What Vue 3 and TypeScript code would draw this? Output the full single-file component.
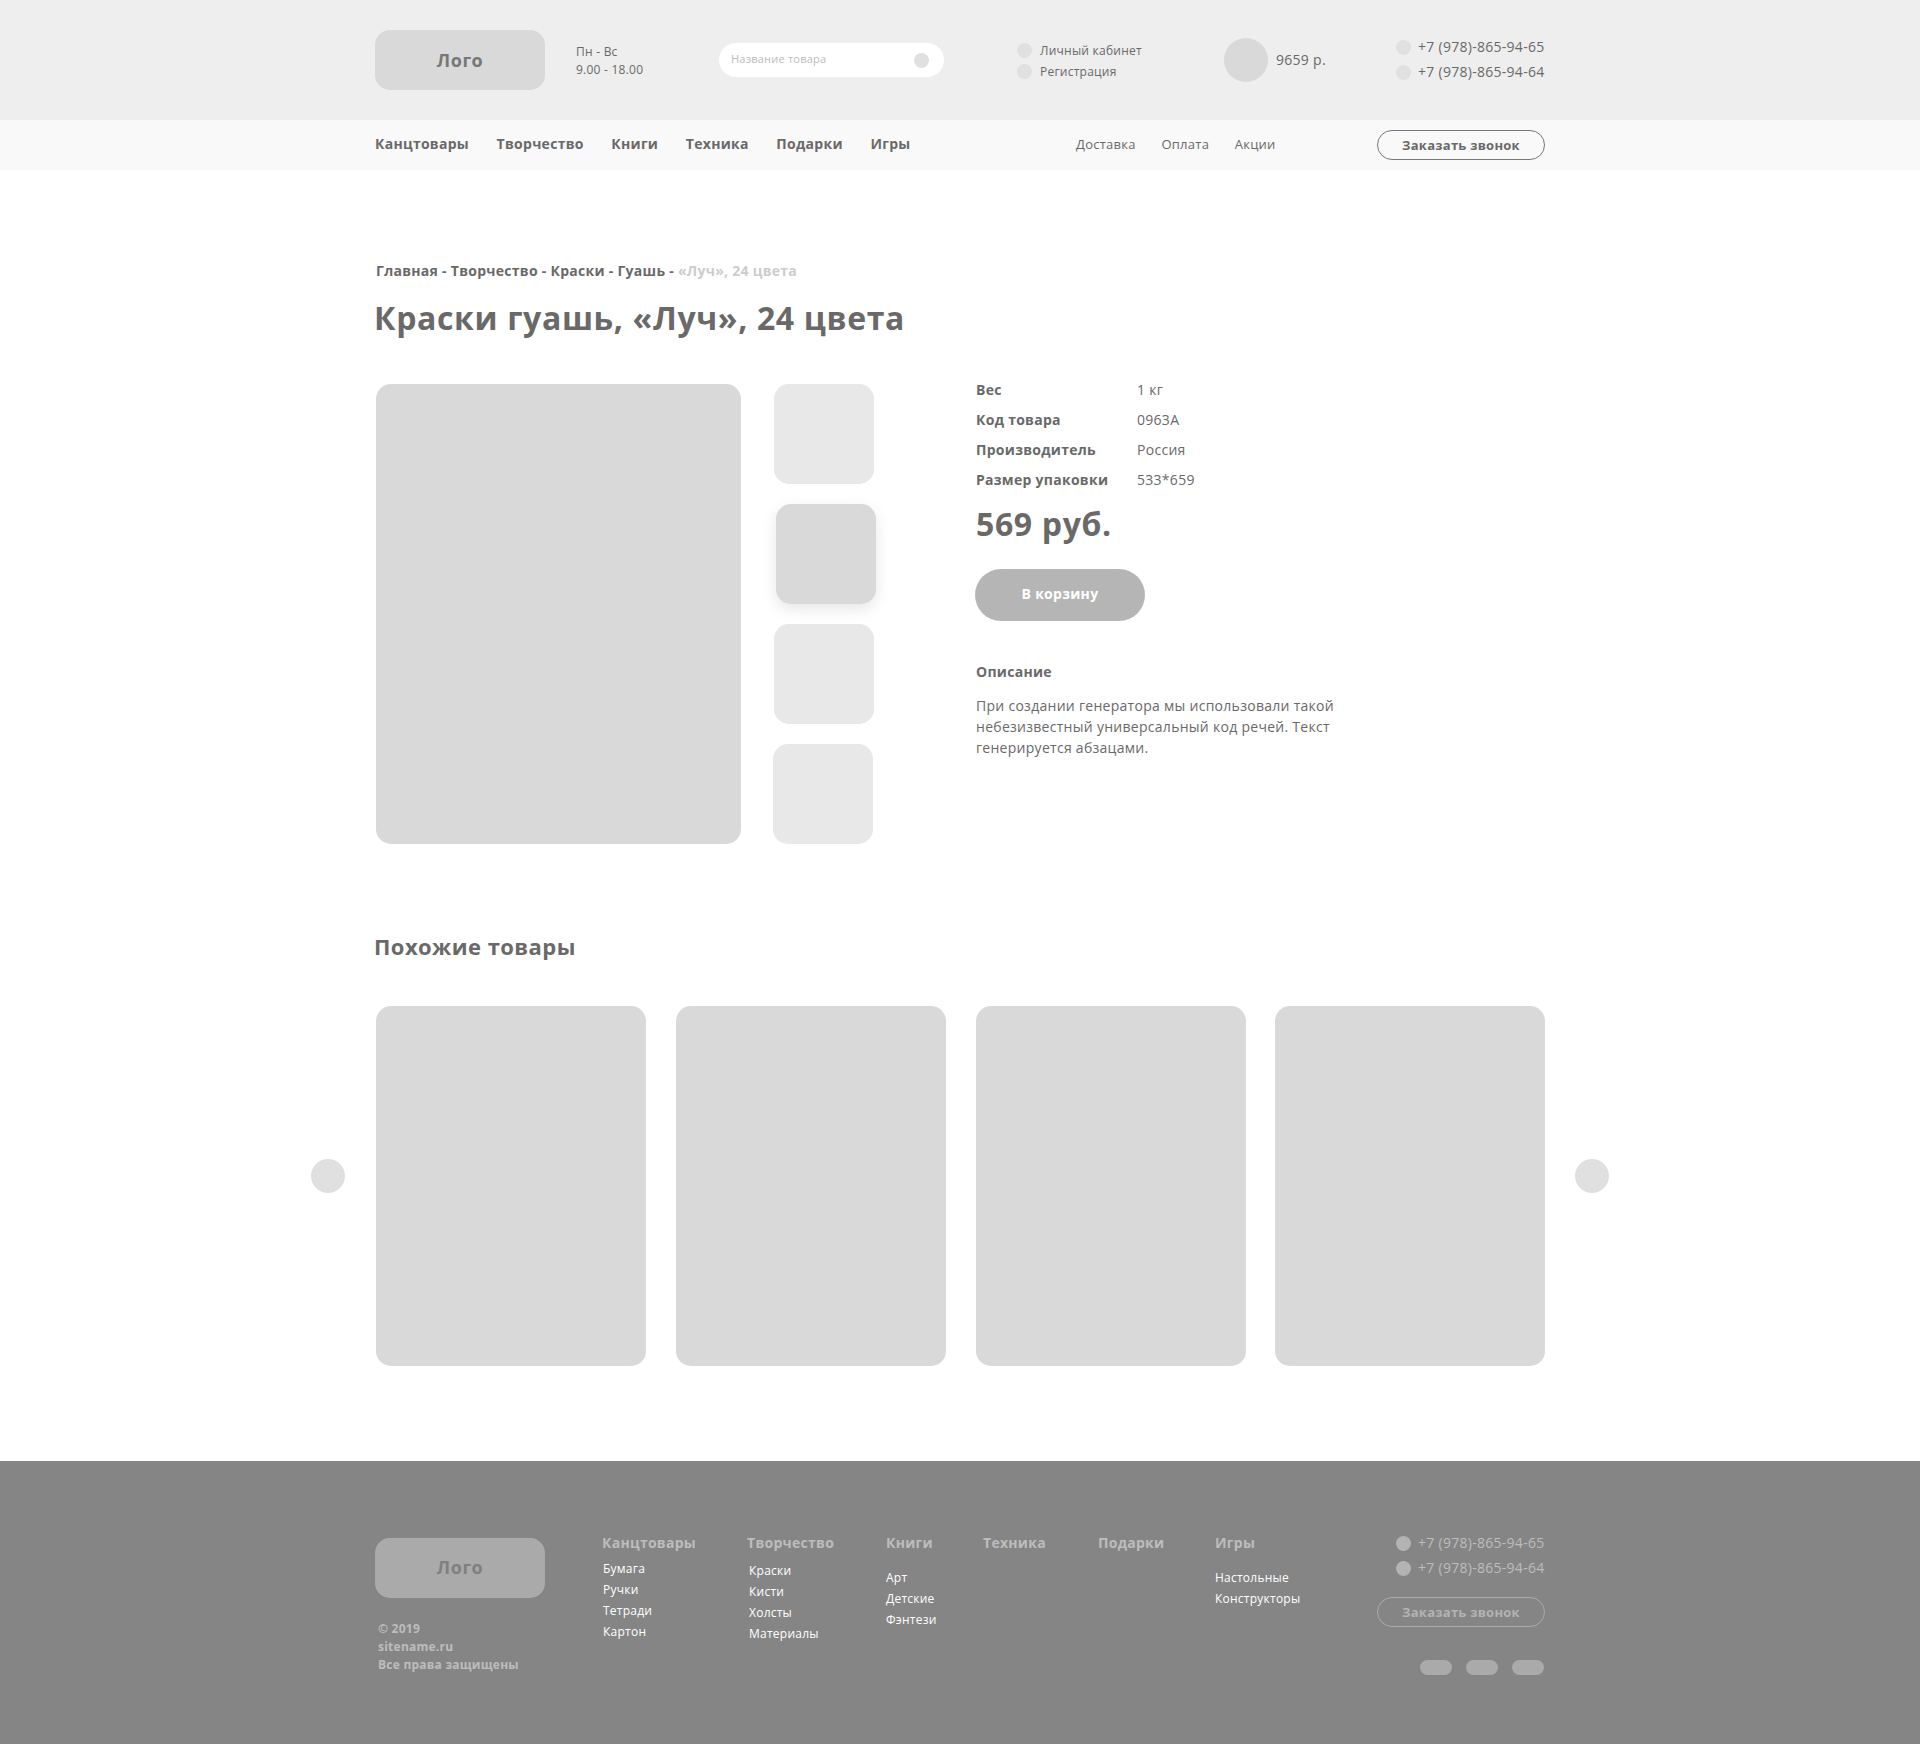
<script setup lang="ts">
interface FooterColumn {
  title: string;
  items: string[];
  variant: string;
}

const navItems = ['Канцтовары', 'Творчество', 'Книги', 'Техника', 'Подарки', 'Игры'];
const infoLinks = ['Доставка', 'Оплата', 'Акции'];
const phones = ['+7 (978)-865-94-65', '+7 (978)-865-94-64'];
const thumbs = ['first', 'active', 'third', 'last'];
const specs = [
  { label: 'Вес', value: '1 кг' },
  { label: 'Код товара', value: '0963А' },
  { label: 'Производитель', value: 'Россия' },
  { label: 'Размер упаковки', value: '533*659' },
];
const footerColumns: FooterColumn[] = [
  { title: 'Канцтовары', items: ['Бумага', 'Ручки', 'Тетради', 'Картон'], variant: 'col-stationery' },
  { title: 'Творчество', items: ['Краски', 'Кисти', 'Холсты', 'Материалы'], variant: 'col-craft' },
  { title: 'Книги', items: ['Арт', 'Детские', 'Фэнтези'], variant: 'col-books' },
  { title: 'Техника', items: [], variant: 'col-tech' },
  { title: 'Подарки', items: [], variant: 'col-gifts' },
  { title: 'Игры', items: ['Настольные', 'Конструкторы'], variant: 'col-games' },
];
</script>

<template>
  <div class="page">
    <header class="top">
      <div class="wrap top-row">
        <div class="logo">Лого</div>
        <div class="hours">
          <div>Пн - Вс</div>
          <div>9.00 - 18.00</div>
        </div>
        <div class="search">
          <span class="search-text">Название товара</span>
          <span class="search-dot"></span>
        </div>
        <div class="account">
          <div class="account-row"><span class="dot"></span>Личный кабинет</div>
          <div class="account-row"><span class="dot"></span>Регистрация</div>
        </div>
        <div class="cart">
          <span class="cart-icon"></span>
          <span class="cart-sum">9659 р.</span>
        </div>
        <div class="phones">
          <div v-for="phone in phones" :key="phone" class="phone"><span class="dot"></span><span class="phone-num">{{ phone }}</span></div>
        </div>
      </div>
    </header>

    <nav class="nav">
      <div class="wrap nav-row">
        <div class="nav-main">
          <span v-for="item in navItems" :key="item">{{ item }}</span>
        </div>
        <div class="nav-info">
          <span v-for="link in infoLinks" :key="link">{{ link }}</span>
        </div>
        <button class="call-btn">Заказать звонок</button>
      </div>
    </nav>

    <main class="wrap content">
      <div class="crumbs">Главная - Творчество - Краски - Гуашь - <span>«Луч», 24 цвета</span></div>
      <h1 class="title">Краски гуашь, «Луч», 24 цвета</h1>

      <section class="product">
        <div class="main-image"></div>
        <div class="thumbs">
          <div v-for="thumb in thumbs" :key="thumb" class="thumb" :class="thumb"></div>
        </div>
        <div class="details">
          <div v-for="spec in specs" :key="spec.label" class="spec">
            <span class="spec-label">{{ spec.label }}</span>
            <span>{{ spec.value }}</span>
          </div>
          <div class="price">569 руб.</div>
          <button class="buy-btn">В корзину</button>
          <div class="desc-title">Описание</div>
          <p class="desc">При создании генератора мы использовали такой небезизвестный универсальный код речей. Текст генерируется абзацами.</p>
        </div>
      </section>

      <h2 class="similar-title">Похожие товары</h2>
      <section class="carousel">
        <span class="arrow arrow-left"></span>
        <div class="cards">
          <div v-for="n in 4" :key="n" class="card"></div>
        </div>
        <span class="arrow arrow-right"></span>
      </section>
    </main>

    <footer class="footer">
      <div class="wrap footer-row">
        <div class="footer-brand">
          <div class="logo footer-logo">Лого</div>
          <div class="copy">
            <div>© 2019</div>
            <div>sitename.ru</div>
            <div>Все права защищены</div>
          </div>
        </div>
        <div v-for="col in footerColumns" :key="col.title" class="footer-col" :class="col.variant">
          <div class="footer-head">{{ col.title }}</div>
          <ul class="footer-list">
            <li v-for="item in col.items" :key="item">{{ item }}</li>
          </ul>
        </div>
        <div class="footer-contacts">
          <div class="phones">
            <div v-for="phone in phones" :key="phone" class="phone"><span class="dot"></span><span class="phone-num">{{ phone }}</span></div>
          </div>
          <button class="call-btn">Заказать звонок</button>
          <div class="socials">
            <span v-for="n in 3" :key="n"></span>
          </div>
        </div>
      </div>
    </footer>
  </div>
</template>

<style>
body {
  margin: 0;
  background: #fff;
}
</style>

<style scoped>
.page {
  font-family: 'Open Sans', sans-serif;
  color: #696969;
  font-size: 14px;
  height: 1744px;
  overflow: hidden;
}

.page * {
  letter-spacing: 0.02em;
}

.wrap {
  width: 1170px;
  margin: 0 auto;
}

.top {
  background: #eee;
  height: 120px;
}

.top-row {
  display: flex;
  align-items: center;
  height: 120px;
}

.logo {
  flex: none;
  width: 170px;
  height: 60px;
  border-radius: 15px;
  background: #d9d9d9;
  display: flex;
  align-items: center;
  justify-content: center;
  font-size: 18px;
  font-weight: 700;
  letter-spacing: 0.03em;
  color: #777;
}

.hours {
  flex: none;
  width: 143px;
  margin: 2px 0 0 31px;
  font-size: 12px;
  line-height: 18px;
}

.search {
  flex: none;
  box-sizing: border-box;
  width: 225px;
  height: 34px;
  border-radius: 17px;
  background: #fff;
  padding: 0 15px 0 12px;
  display: flex;
  align-items: center;
  justify-content: space-between;
}

.search-text {
  margin-top: -3px;
  font-size: 11px;
  color: #bbb;
}

.search-dot,
.dot {
  flex: none;
  width: 15px;
  height: 15px;
  border-radius: 50%;
  background: #e0e0e0;
}

.account {
  flex: none;
  width: 207px;
  margin: 1px 0 0 73px;
  font-size: 12px;
}

.account-row {
  display: flex;
  align-items: center;
  gap: 8px;
  height: 21px;
}

.cart {
  flex: none;
  width: 172px;
  display: flex;
  align-items: center;
  gap: 8px;
  font-size: 14px;
}

.cart-sum {
  margin-top: -2px;
}

.cart-icon {
  width: 44px;
  height: 44px;
  border-radius: 50%;
  background: #d9d9d9;
}

.phone {
  display: flex;
  align-items: center;
  gap: 7px;
  height: 25px;
  white-space: nowrap;
}

.phone-num {
  margin-top: -2px;
}

.nav {
  background: #f9f9f9;
  height: 50px;
}

.nav-row {
  display: flex;
  align-items: center;
  height: 50px;
}

.nav-main {
  flex: none;
  width: 701px;
  display: flex;
  gap: 27.6px;
  margin-top: -3px;
  font-weight: 700;
}

.nav-info {
  flex: none;
  width: 301px;
  display: flex;
  gap: 25.6px;
  margin-top: -2px;
  font-size: 13px;
}

.call-btn {
  flex: none;
  box-sizing: border-box;
  width: 168px;
  height: 30px;
  border: 1px solid #777;
  border-radius: 15px;
  background: transparent;
  font-family: inherit;
  font-size: 13px;
  font-weight: 700;
  color: #696969;
  padding: 0;
}

.content {
  padding-top: 91px;
}

.crumbs {
  padding-left: 1px;
  line-height: 20px;
  font-weight: 700;
}

.crumbs span {
  color: #ccc;
}

.title {
  margin: 17px 0 0 -1px;
  font-size: 32px;
  line-height: 40px;
  font-weight: 700;
}

.product {
  display: flex;
  margin-top: 46px;
  padding-left: 1px;
  height: 460px;
}

.main-image {
  flex: none;
  width: 365px;
  height: 460px;
  border-radius: 15px;
  background: #d9d9d9;
}

.thumbs {
  flex: none;
  width: 202px;
  margin-left: 33px;
  display: flex;
  flex-direction: column;
  gap: 20px;
}

.thumb {
  width: 100px;
  height: 100px;
  border-radius: 15px;
  background: #e8e8e8;
}

.thumb.active {
  margin-left: 2px;
  background: #d9d9d9;
  box-shadow: 0 5px 15px rgba(0, 0, 0, 0.1);
}

.thumb.last {
  margin-left: -1px;
}

.details {
  flex: none;
  width: 370px;
  margin-top: -10px;
}

.spec {
  display: flex;
  height: 30px;
  align-items: center;
}

.spec-label {
  width: 161px;
  font-weight: 700;
}

.price {
  font-size: 32px;
  line-height: 44px;
  font-weight: 700;
  margin-top: 8px;
}

.buy-btn {
  display: block;
  width: 170px;
  height: 52px;
  margin: 23px 0 0 -1px;
  border: none;
  border-radius: 26px;
  background: #b5b5b5;
  color: #fff;
  font-family: inherit;
  font-size: 14px;
  font-weight: 700;
  padding: 0 0 3px;
}

.desc-title {
  margin-top: 41px;
  line-height: 20px;
  font-weight: 700;
}

.desc {
  margin: 13px 0 0;
  line-height: 21px;
}

.similar-title {
  margin: 87px 0 0 -1px;
  font-size: 22px;
  line-height: 30px;
  font-weight: 700;
}

.carousel {
  position: relative;
  margin-top: 45px;
  padding-left: 1px;
}

.cards {
  display: flex;
  gap: 30px;
}

.card {
  flex: none;
  width: 270px;
  height: 360px;
  border-radius: 15px;
  background: #d9d9d9;
}

.card:last-child {
  margin-left: -1px;
}

.arrow {
  position: absolute;
  top: 153px;
  width: 34px;
  height: 34px;
  border-radius: 50%;
  background: #e0e0e0;
}

.arrow-left {
  left: -64px;
}

.arrow-right {
  right: -64px;
}

.footer {
  margin-top: 95px;
  background: #858585;
  height: 283px;
  padding-top: 77px;
  box-sizing: border-box;
}

.footer-row {
  display: flex;
  align-items: flex-start;
}

.footer-brand {
  flex: none;
  width: 227px;
}

.footer-logo {
  background: #aaa;
  padding-bottom: 2px;
  box-sizing: border-box;
  color: #808080;
}

.copy {
  margin-top: 22px;
  padding-left: 3px;
  font-size: 12px;
  line-height: 18px;
  font-weight: 700;
  color: #bdbdbd;
}

.footer-col {
  flex: none;
  margin-top: -5px;
}

.footer-head {
  line-height: 20px;
  font-weight: 700;
  color: #bdbdbd;
}

.footer-list {
  list-style: none;
  margin: 0;
  padding: 0;
  font-size: 12px;
  line-height: 21px;
  color: #fff;
}

.col-stationery { width: 145px; }
.col-craft { width: 139px; }
.col-books { width: 97px; }
.col-tech { width: 115px; }
.col-gifts { width: 117px; }
.col-games { width: 162px; }

.col-stationery .footer-list {
  margin: 5px 0 0 1px;
}

.col-craft .footer-list {
  margin: 7px 0 0 2px;
}

.col-books .footer-list,
.col-games .footer-list {
  margin-top: 14px;
}

.footer-contacts {
  flex: none;
  width: 168px;
  margin-top: -7px;
}

.footer-contacts .phones {
  padding-left: 19px;
  color: #bdbdbd;
}

.footer-contacts .dot {
  background: #b3b3b3;
}

.footer-contacts .call-btn {
  display: block;
  margin-top: 16px;
  border-color: #aaa;
  color: #b3b3b3;
}

.socials {
  display: flex;
  justify-content: flex-end;
  gap: 14px;
  margin-top: 33px;
  padding-right: 1px;
}

.socials span {
  width: 32px;
  height: 15px;
  border-radius: 8px;
  background: #aaa;
}
</style>
